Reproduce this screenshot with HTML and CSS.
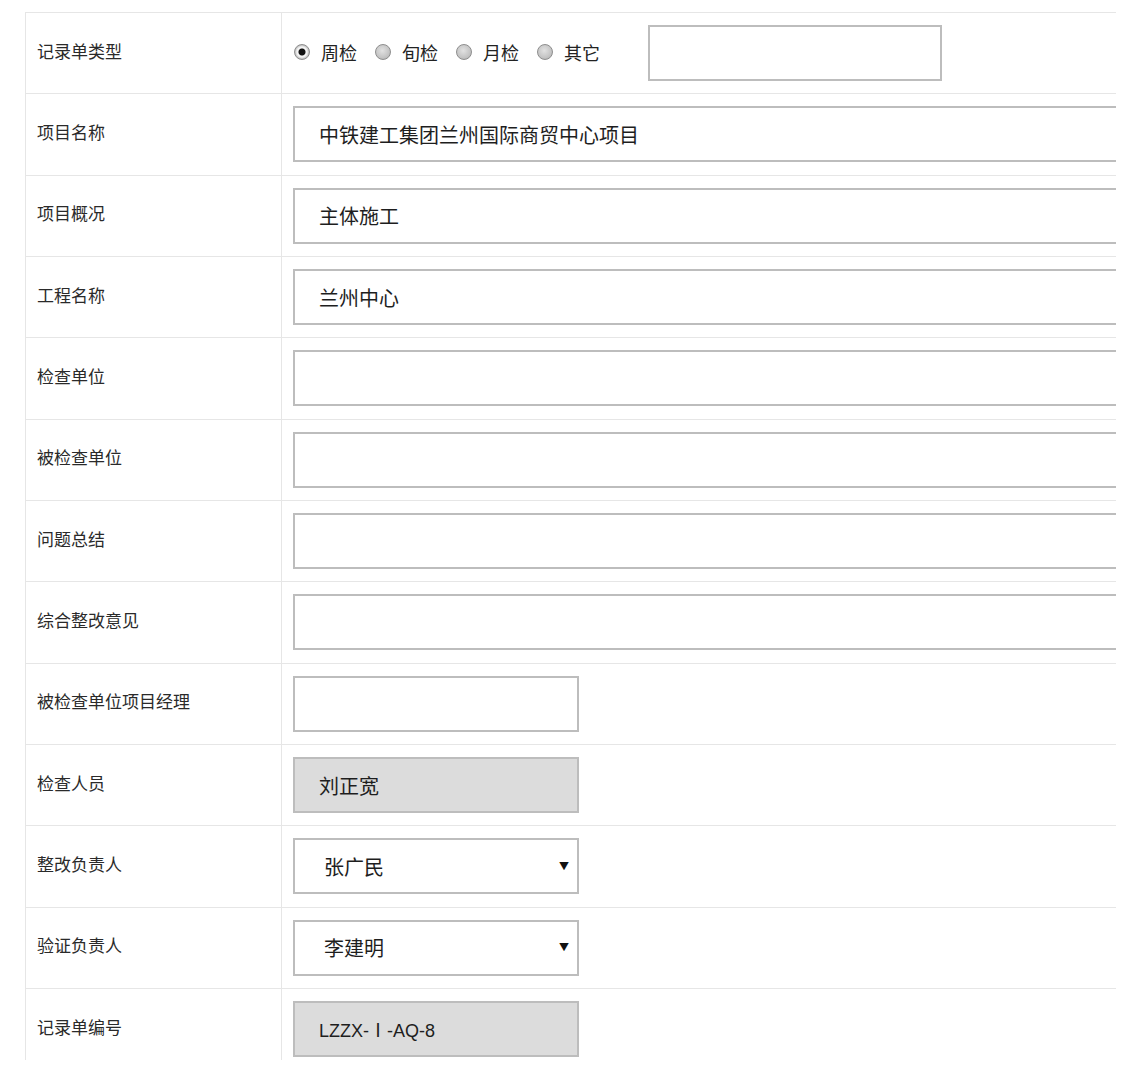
FILE: index.html
```html
<!DOCTYPE html>
<html lang="zh-CN">
<head>
<meta charset="utf-8">
<title>记录单</title>
<link rel="stylesheet" href="styles.css">
</head>
<body>
<div class="frame">
  <div class="form">
    <div class="label">记录单类型</div>
    <div class="field">
      <div class="radios">
        <label class="radio"><span class="dot checked"></span>周检</label>
        <label class="radio"><span class="dot"></span>旬检</label>
        <label class="radio"><span class="dot"></span>月检</label>
        <label class="radio"><span class="dot"></span>其它</label>
        <div class="box other"></div>
      </div>
    </div>

    <div class="label">项目名称</div>
    <div class="field"><div class="box wide">中铁建工集团兰州国际商贸中心项目</div></div>

    <div class="label">项目概况</div>
    <div class="field"><div class="box wide">主体施工</div></div>

    <div class="label">工程名称</div>
    <div class="field"><div class="box wide">兰州中心</div></div>

    <div class="label">检查单位</div>
    <div class="field"><div class="box wide"></div></div>

    <div class="label">被检查单位</div>
    <div class="field"><div class="box wide"></div></div>

    <div class="label">问题总结</div>
    <div class="field"><div class="box wide"></div></div>

    <div class="label">综合整改意见</div>
    <div class="field"><div class="box wide"></div></div>

    <div class="label">被检查单位项目经理</div>
    <div class="field"><div class="box small"></div></div>

    <div class="label">检查人员</div>
    <div class="field"><div class="box small disabled">刘正宽</div></div>

    <div class="label">整改负责人</div>
    <div class="field"><div class="box small select"><span>张广民</span><span class="arrow">▼</span></div></div>

    <div class="label">验证负责人</div>
    <div class="field"><div class="box small select"><span>李建明</span><span class="arrow">▼</span></div></div>

    <div class="label">记录单编号</div>
    <div class="field"><div class="box small disabled latin">LZZX-Ⅰ-AQ-8</div></div>
  </div>
</div>
</body>
</html>
```

FILE: styles.css
```css
html, body {
  margin: 0;
  padding: 0;
  background: #ffffff;
}

body {
  font-family: "Noto Sans CJK SC", "Liberation Sans", sans-serif;
  color: #222;
}

.frame {
  margin: 12px 0 0 25px;
  width: 1091px;
  height: 1048px;
  overflow: hidden;
}

.form {
  display: grid;
  grid-template-columns: 256px 1fr;
  grid-auto-rows: 81.33px;
  border-top: 1px solid #e6e6e6;
  border-left: 1px solid #e6e6e6;
}

.label {
  display: flex;
  align-items: center;
  padding: 0 0 6px 11px;
  font-size: 17px;
  color: #2a2a2a;
  border-bottom: 1px solid #e6e6e6;
  border-right: 1px solid #e6e6e6;
  white-space: nowrap;
}

.field {
  display: flex;
  align-items: center;
  padding-left: 11px;
  border-bottom: 1px solid #e6e6e6;
  overflow: hidden;
  min-width: 0;
}

.radios {
  display: flex;
  align-items: center;
  font-size: 18px;
  color: #222;
}

.radio {
  display: flex;
  align-items: center;
  margin-right: 17px;
  padding-bottom: 2px;
}

.dot {
  width: 16px;
  height: 16px;
  border-radius: 50%;
  border: 1px solid #8e8e8e;
  background: radial-gradient(circle at 45% 40%, #e2e2e2 0%, #c2c2c2 65%, #a4a4a4 100%);
  margin: 0 11px 0 1px;
  box-sizing: border-box;
}

.dot.checked {
  background: radial-gradient(circle, #111 0 3px, #f4f4f4 4px 5px, #bdbdbd 7px);
}

.box {
  box-sizing: border-box;
  height: 56px;
  border: 2px solid #bdbdbd;
  background: #fff;
  display: flex;
  align-items: center;
  padding-left: 24px;
  font-size: 20px;
  color: #1e1e1e;
  flex-shrink: 0;
  white-space: nowrap;
}

.box.other {
  width: 294px;
  margin-left: 31px;
}

.box.wide {
  width: 900px;
  border-right: none;
}

.box.small {
  width: 286px;
}

.box.disabled {
  background: #dcdcdc;
}

.box.latin {
  font-family: "Liberation Sans", "Noto Sans CJK SC", sans-serif;
  font-size: 18px;
  padding-left: 24px;
}

.box.select {
  justify-content: space-between;
  padding-left: 29px;
  padding-right: 8px;
}

.arrow {
  font-size: 10px;
  color: #111;
  margin-top: -2px;
}
```
